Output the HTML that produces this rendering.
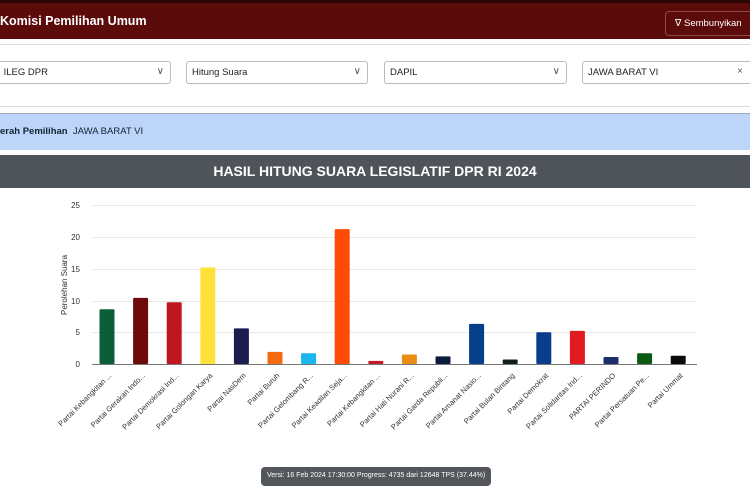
<!DOCTYPE html>
<html><head><meta charset="utf-8"><style>
*{margin:0;padding:0;box-sizing:border-box}
body{width:750px;height:500px;overflow:hidden;background:#fff;font-family:"Liberation Sans",sans-serif;position:relative}
.hdr{position:absolute;left:0;top:0;width:750px;height:39px;background:#5c0b0b;border-top:3px solid #2a0505}
.hdr .t{position:absolute;left:0;top:11px;color:#fff;font-weight:bold;font-size:12.5px}
.btn{position:absolute;left:665px;top:8px;width:95px;height:25px;border:1px solid #8a4a4a;border-radius:4px;color:#fff;font-size:9.5px;padding:6px 0 0 9px;white-space:nowrap}
.flt{position:absolute;left:0;top:44px;width:750px;height:63px;border-top:1px solid #ddd;border-bottom:1px solid #ddd}
.sel{position:absolute;top:16px;height:23px;border:1px solid #bbb;border-radius:3px;font-size:9.5px;padding:5px 0 0 5px;color:#222}
.sel i{position:absolute;right:6px;top:4px;font-style:normal;color:#555;font-size:10px}
.blue{position:absolute;left:0;top:113px;width:750px;height:37px;background:#bdd5f8;border-top:1px solid #9ab;font-size:9.5px;padding:12px 0 0 0;color:#123}
.title{position:absolute;left:0;top:155px;width:750px;height:33px;background:#4e5459;color:#fff;font-weight:bold;font-size:14px;text-align:center;padding-top:8px}
.tip{position:absolute;left:261px;top:467px;width:230px;height:19px;background:#53575c;border-radius:4px;color:#fff;font-size:7px;padding:5px 0 0 6px;white-space:nowrap;overflow:hidden}
</style></head><body>
<div class="hdr"><div class="t">Komisi Pemilihan Umum</div><div class="btn">&#8711; Sembunyikan</div></div>
<div class="flt">
<div class="sel" style="left:-5px;width:176px">&nbsp;ILEG DPR<i>&#8744;</i></div>
<div class="sel" style="left:186px;width:182px">Hitung Suara<i>&#8744;</i></div>
<div class="sel" style="left:384px;width:183px">DAPIL<i>&#8744;</i></div>
<div class="sel" style="left:582px;width:170px">JAWA BARAT VI<i style="right:8px">&times;</i></div>
</div>
<div class="blue"><b>erah Pemilihan</b>&nbsp; JAWA BARAT VI</div>
<div class="title">HASIL HITUNG SUARA LEGISLATIF DPR RI 2024</div>
<svg style="position:absolute;left:0;top:0" width="750" height="500" font-family="Liberation Sans,sans-serif">
<g stroke="#e8e8e8" stroke-width="1">
<line x1="92" x2="697" y1="205.5" y2="205.5"/><line x1="92" x2="697" y1="237.5" y2="237.5"/><line x1="92" x2="697" y1="269.5" y2="269.5"/><line x1="92" x2="697" y1="301.5" y2="301.5"/><line x1="92" x2="697" y1="332.5" y2="332.5"/>
</g>
<line x1="92" x2="697" y1="364.5" y2="364.5" stroke="#777"/>
<g font-size="8" fill="#333" text-anchor="end">
<text x="80" y="208">25</text><text x="80" y="240">20</text><text x="80" y="272">15</text><text x="80" y="304">10</text><text x="80" y="335">5</text><text x="80" y="367">0</text>
</g>
<text transform="translate(67,285) rotate(-90)" font-size="8" fill="#333" text-anchor="middle">Perolehan Suara</text>
<g id="bars"></g>
<g id="labs" font-size="7.5" fill="#333" text-anchor="end"></g>
</svg>
<div class="tip">Versi: 16 Feb 2024 17:30:00 Progress: 4735 dari 12648 TPS (37.44%)</div>
<script>
var d=[["Partai Kebangkitan ...",8.6,"#0b5e3a"],["Partai Gerakan Indo...",10.4,"#6e0a0a"],["Partai Demokrasi Ind...",9.7,"#c0161f"],["Partai Golongan Karya",15.2,"#fde23c"],["Partai NasDem",5.6,"#1b1d4e"],["Partai Buruh",1.9,"#f36a10"],["Partai Gelombang R...",1.7,"#1ab6ee"],["Partai Keadilan Seja...",21.2,"#fe4b05"],["Partai Kebangkitan ...",0.5,"#c01a24"],["Partai Hati Nurani R...",1.5,"#e98d14"],["Partai Garda Republi...",1.2,"#0e1c3c"],["Partai Amanat Nasio...",6.3,"#043f8c"],["Partai Bulan Bintang",0.7,"#122016"],["Partai Demokrat",5,"#0a3c8c"],["Partai Solidaritas Ind...",5.2,"#e01a1e"],["PARTAI PERINDO",1.1,"#1a2f6c"],["Partai Persatuan Pe...",1.7,"#0c5a14"],["Partai Ummat",1.3,"#0a0a0a"]];
var b="",l="";
d.forEach(function(e,i){var cx=107+i*33.6,h=e[1]*6.36;b+='<rect x="'+(cx-7.5)+'" y="'+(364-h)+'" width="15" height="'+h+'" rx="1" fill="'+e[2]+'"/>';l+='<text transform="translate('+(cx+5)+',376) rotate(-45)">'+e[0]+'</text>';});
document.getElementById("bars").innerHTML=b;document.getElementById("labs").innerHTML=l;
</script>
</body></html>
